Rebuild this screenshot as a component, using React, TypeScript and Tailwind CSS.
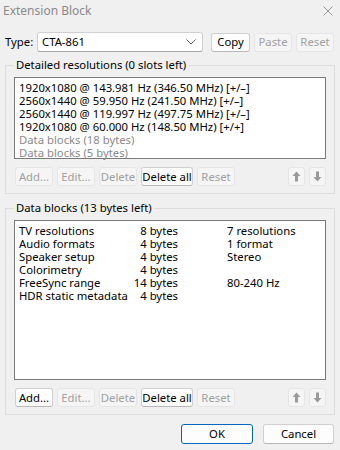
import React from 'react';

interface Bloque {
  nombre: string;
  bytes: string;
  info: string;
}

const RESOLUCIONES = [
  '1920x1080 @ 143.981 Hz (346.50 MHz) [+/\u2013]',
  '2560x1440 @ 59.950 Hz (241.50 MHz) [+/\u2013]',
  '2560x1440 @ 119.997 Hz (497.75 MHz) [+/\u2013]',
  '1920x1080 @ 60.000 Hz (148.50 MHz) [+/+]',
];

const BLOQUES: Bloque[] = [
  { nombre: 'TV resolutions', bytes: '8 bytes', info: '7 resolutions' },
  { nombre: 'Audio formats', bytes: '4 bytes', info: '1 format' },
  { nombre: 'Speaker setup', bytes: '4 bytes', info: 'Stereo' },
  { nombre: 'Colorimetry', bytes: '4 bytes', info: '' },
  { nombre: 'FreeSync range', bytes: '14 bytes', info: '80-240 Hz' },
  { nombre: 'HDR static metadata', bytes: '4 bytes', info: '' },
];

function Boton({ label, w, enabled = false }: { label: string; w: string; enabled?: boolean }) {
  return (
    <button
      className={`${w} h-[19px] rounded-[3px] border flex items-center justify-center leading-none whitespace-nowrap ${
        enabled
          ? 'bg-[#fdfdfd] border-[#d0d0d0] border-b-[#b8b8b8] text-black'
          : 'bg-[#f5f5f5] border-[#e5e5e5] text-[#a0a0a0]'
      }`}
    >
      {label}
    </button>
  );
}

function Flecha({ arriba }: { arriba: boolean }) {
  return (
    <div className="w-[17px] h-[19px] rounded-[3px] border border-[#e5e5e5] bg-[#f5f5f5] flex items-center justify-center">
      <svg width="9" height="11" viewBox="0 0 9 11" className={arriba ? '' : 'rotate-180'}>
        <path d="M4.5 0.5 L8.5 5 L6 5 L6 10.5 L3 10.5 L3 5 L0.5 5 Z" fill="#9a9a9a" />
      </svg>
    </div>
  );
}

function FilaBotones({ addEnabled }: { addEnabled: boolean }) {
  return (
    <div className="flex items-center mt-[8px] pl-[1px]">
      <div className="flex gap-[4px]">
        <Boton label="Add..." w="w-[38px]" enabled={addEnabled} />
        <Boton label="Edit..." w="w-[38px]" />
        <Boton label="Delete" w="w-[38px]" />
        <Boton label="Delete all" w="w-[52px]" enabled />
        <Boton label="Reset" w="w-[38px]" />
      </div>
      <div className="ml-auto flex gap-[4px]">
        <Flecha arriba />
        <Flecha arriba={false} />
      </div>
    </div>
  );
}

export default function App() {
  return (
    <div className="w-[340px] h-[450px] bg-[#f0f0f0] text-[11.3px] text-black overflow-hidden font-['Noto_Sans','Liberation_Sans',sans-serif]">
      {/* Barra de título */}
      <div className="h-[22px] flex items-center justify-between pl-[3px] pr-[7px]">
        <span className="text-[#8a8a8a] text-[12px]">Extension Block</span>
        <svg width="10" height="10" viewBox="0 0 10 10">
          <path d="M0.5 0.5 L9.5 9.5 M9.5 0.5 L0.5 9.5" stroke="#9a9a9a" strokeWidth="1" />
        </svg>
      </div>

      {/* Tipo */}
      <div className="flex items-center mt-[10px] pl-[5px] h-[20px]">
        <span className="w-[32px]">Type:</span>
        <div className="w-[166px] h-[20px] bg-white border border-[#d0d0d0] border-b-[#a8a8a8] rounded-[3px] flex items-center pl-[4px] pr-[6px]">
          <span className="flex-1">CTA-861</span>
          <svg width="10" height="6" viewBox="0 0 10 6">
            <path d="M0.5 0.5 L5 5 L9.5 0.5" stroke="#606060" fill="none" strokeWidth="1" />
          </svg>
        </div>
        <div className="flex gap-[4px] ml-[8px]">
          <Boton label="Copy" w="w-[39px]" enabled />
          <Boton label="Paste" w="w-[38px]" />
          <Boton label="Reset" w="w-[38px]" />
        </div>
      </div>

      {/* Resoluciones detalladas */}
      <fieldset className="mx-[5px] mt-[5px] border border-[#dcdcdc] px-[8px] pb-[7px] pt-[4px]">
        <legend className="px-[2px] leading-[16px]">Detailed resolutions (0 slots left)</legend>
        <div className="h-[82px] bg-white border border-[#7a7a7a] pl-[4px] pt-[3px] leading-[13px] whitespace-nowrap">
          {RESOLUCIONES.map((r) => (
            <div key={r}>{r}</div>
          ))}
          <div className="text-[#8a8a8a]">Data blocks (18 bytes)</div>
          <div className="text-[#8a8a8a]">Data blocks (5 bytes)</div>
        </div>
        <FilaBotones addEnabled={false} />
      </fieldset>

      {/* Bloques de datos */}
      <fieldset className="mx-[5px] mt-[6px] border border-[#dcdcdc] px-[8px] pb-[7px] pt-[4px]">
        <legend className="px-[2px] leading-[16px]">Data blocks (13 bytes left)</legend>
        <div className="h-[160px] bg-white border border-[#7a7a7a] pl-[4px] pt-[3px] leading-[13px] whitespace-nowrap">
          {BLOQUES.map((b) => (
            <div key={b.nombre} className="flex">
              <span className="w-[112px]">{b.nombre}</span>
              <span className="w-[47px] text-right">{b.bytes}</span>
              <span className="ml-[49px]">{b.info}</span>
            </div>
          ))}
        </div>
        <FilaBotones addEnabled />
      </fieldset>

      {/* Aceptar / Cancelar */}
      <div className="flex justify-end gap-[10px] mt-[9px] pr-[6px]">
        <button className="w-[72px] h-[20px] rounded-[3px] border border-[#0067c0] bg-[#fdfdfd] leading-none">OK</button>
        <button className="w-[71px] h-[20px] rounded-[3px] border border-[#d0d0d0] border-b-[#b8b8b8] bg-[#fdfdfd] leading-none">Cancel</button>
      </div>
    </div>
  );
}
